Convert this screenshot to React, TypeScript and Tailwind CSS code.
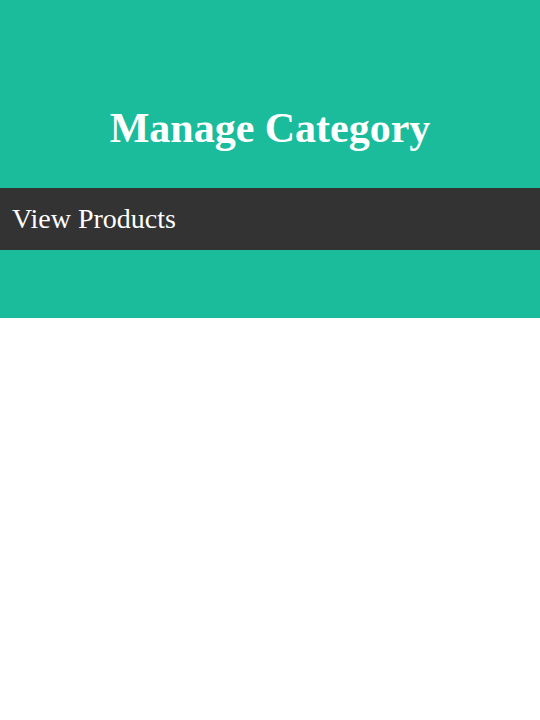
export default function App() {
  return (
    <div className="w-full min-h-[720px] bg-white" style={{ fontFamily: '"Liberation Serif", "Times New Roman", serif' }}>
      <header className="bg-[#1abc9c] h-[318px] flex flex-col">
        <h1 className="mt-[105px] h-[46px] text-center text-white font-bold text-[42px] leading-[46px]">
          Manage Category
        </h1>
        <nav className="mt-[37px] h-[62px] bg-[#333333] flex items-center px-[12px]">
          <span className="text-white text-[28px] leading-[32px]">View Products</span>
        </nav>
      </header>
    </div>
  );
}
